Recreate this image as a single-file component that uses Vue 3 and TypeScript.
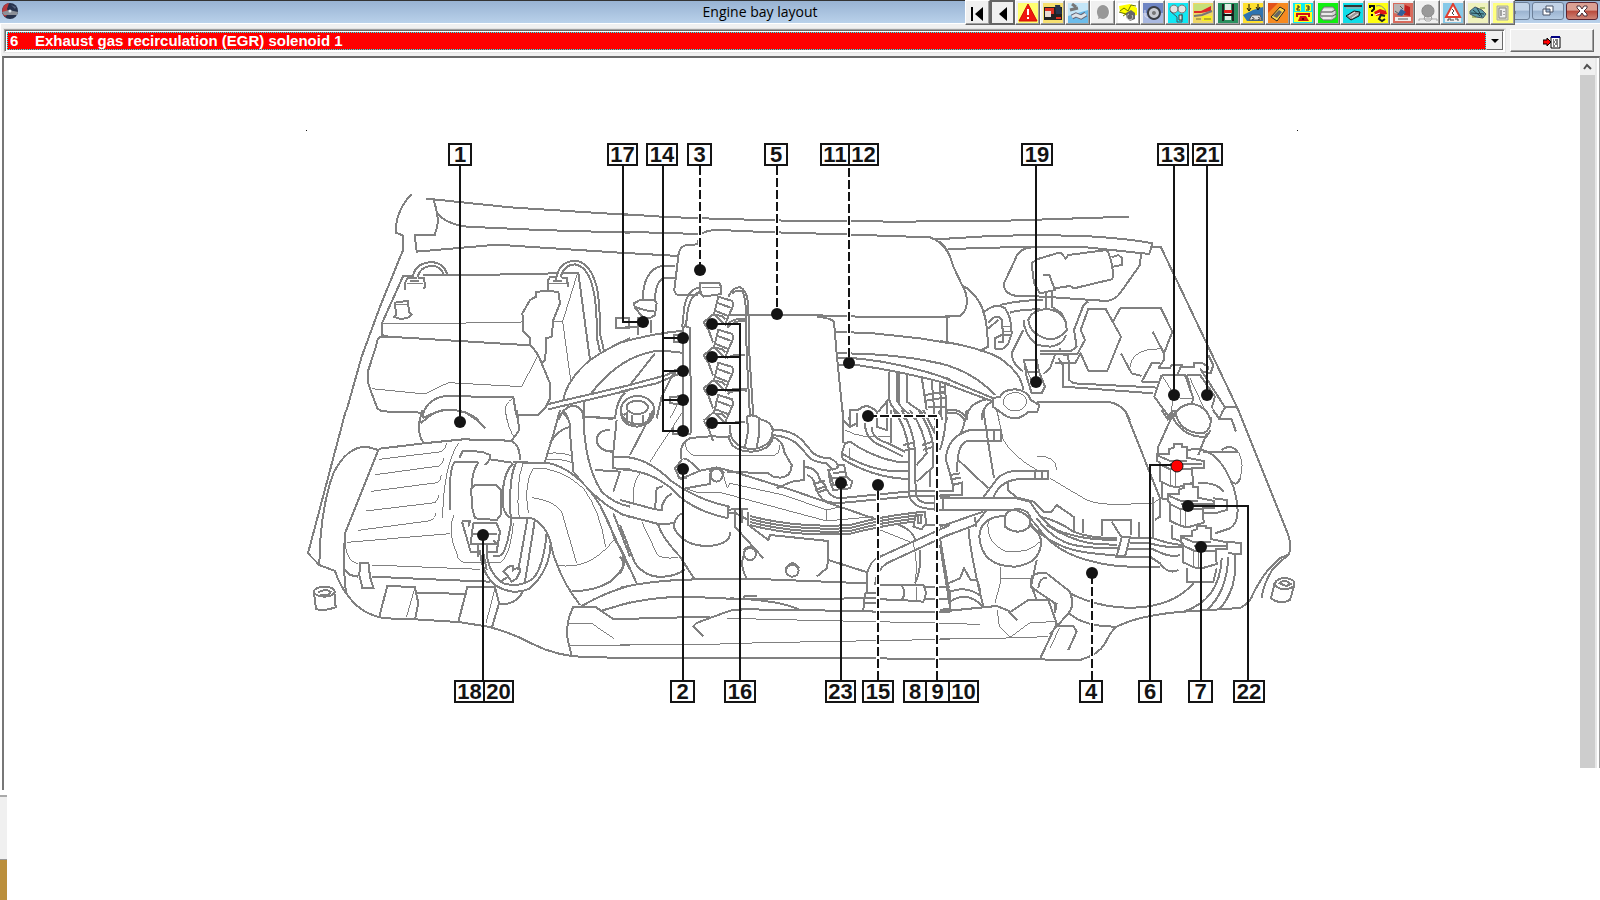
<script setup lang="ts">
import { ref } from 'vue'

interface Part { d: string; f?: string; s?: string; w?: number }
interface Tool { name: string; bg: string; parts: Part[] }
interface Box { n: number; x: number; w: number; y: number }
interface Lead { d: string; dashed?: boolean }
interface Tile { x: number; y: number; thick: string[]; thin: string[] }

const selected = ref('6')

const tools: Tool[] = [
  { name: 'First', bg: '#f0f0f0', parts: [{ d: 'M3 4h2v14h-2zM15 4v14l-8 -7z', f: '#000' }] },
  { name: 'Previous', bg: '#f0f0f0', parts: [{ d: 'M14 4v14l-8 -7z', f: '#000' }] },
  { name: 'Warnings', bg: '#ffff70', parts: [{ d: 'M10 1L19 18H1z', f: '#f01810', s: '#d01000' }, { d: 'M9 6h2v6h-2zM9 14h2v2h-2z', f: '#fff' }] },
  { name: 'Identification', bg: '#f7e070', parts: [{ d: 'M1 4H19V17H1z', f: '#222' }, { d: 'M2 5H11V11H2z', f: '#e03020' }, { d: 'M2 6H8V14H2z', f: '#e8dcd4' }, { d: 'M2 5H11V8H2z', f: '#e03020' }, { d: 'M12 2H17L19 11H13z', f: '#26364e' }, { d: 'M13 15h5', s: '#e03020', w: 2 }] },
  { name: 'Service', bg: '#6cbcea', parts: [{ d: 'M0 0H20V7L0 13z', f: '#c4e6f8' }, { d: 'M4 1L8 4M2 7L10 5', s: '#777', w: 3 }, { d: 'M4 14L8 12L13 14L18 11', s: '#667', w: 5 }, { d: 'M4 14L8 12L13 14L18 11', s: '#dde3e8', w: 3 }, { d: 'M17 10L20 9M3 15L1 17', s: '#6cbcea', w: 2 }] },
  { name: 'Gearbox', bg: '#f0f0f0', parts: [{ d: 'M11 2A6 7 0 1 1 10.9 2z', f: '#fff' }, { d: 'M10 2A6 7 0 1 1 9.9 2z', f: '#989898' }, { d: 'M6 12L5 16L8 15z', f: '#989898' }] },
  { name: 'Engine', bg: '#fff', parts: [{ d: 'M1 3L12 1L19 5V12L11 14L2 9z', f: '#ff0' }, { d: 'M2 8L6 5L10 8L13 2L18 3M1 9L8 11L5 13', s: '#6c7500', w: 1 }, { d: 'M8 10L13 7L17 10V16L12 18L8 14z', f: '#666' }, { d: 'M11 11A3 3 0 1 0 14 12', s: '#ccc' }] },
  { name: 'Wheels', bg: '#6f86c4', parts: [{ d: 'M0 10H20V20H0z', f: '#a9b8e0' }, { d: 'M11 3A7 7 0 1 1 10.9 3z', f: '#3a3d44' }, { d: 'M11 5A5 5 0 1 1 10.9 5z', f: '#c8cbd2' }, { d: 'M11 8A2 2 0 1 1 10.9 8z', f: '#777' }, { d: 'M2 7V13L5 15', s: '#dde', w: 1 }] },
  { name: 'Timing belt', bg: '#10e8f4', parts: [{ d: 'M6 2A4 4 0 1 1 5.9 2zM14 2A4 4 0 1 1 13.9 2z', f: '#e4e4e4', s: '#777' }, { d: 'M2 8L9 14V19H14V11', s: '#456', w: 1 }, { d: 'M11 12h3v5h-3z', f: '#ddd', s: '#444' }] },
  { name: 'Bodywork', bg: '#f0d766', parts: [{ d: 'M1 1H19V6L1 8z', f: '#c6e07a' }, { d: 'M1 8L8 8L18 3V8L8 10L1 10z', f: '#e02828' }, { d: 'M1 13L9 12L19 8', s: '#777', w: 2 }, { d: 'M9 13H19V18H9z', f: '#f6f020' }, { d: 'M3 16h5M11 16h7', s: '#776b32' }] },
  { name: 'Lifting', bg: '#2a9060', parts: [{ d: 'M7 1H13V17H7z', f: '#dfece4' }, { d: 'M5 1V18M15 1V18', s: '#222', w: 2 }, { d: 'M6 7H14V10H6z', f: '#e02020' }, { d: 'M5 12H15', s: '#111', w: 2 }] },
  { name: 'Alignment', bg: '#ffe030', parts: [{ d: 'M0 12L10 7L20 4V18H4z', f: '#2f73b0' }, { d: 'M6 1V7M4 5L6 8L8 5M15 1V6M13 4L15 7L17 4', s: '#111', w: 1 }, { d: 'M6 17L9 12H17L19 17z', f: '#ddd', s: '#555' }, { d: 'M9 15A1 1 0 1 1 9 16M15 15A1 1 0 1 1 15 16', s: '#333', w: 1 }] },
  { name: 'Diagnostics', bg: '#f68a20', parts: [{ d: 'M0 0H10L0 10z', f: '#e25218' }, { d: 'M3 14L12 4L17 7L9 18z', f: '#ffd84a', s: '#222' }, { d: 'M5 13L11 7L14 9L9 15z', f: '#666' }] },
  { name: 'Telephone', bg: '#10eaf0', parts: [{ d: 'M2 1H8V8H2zM12 1H18V8H12zM1 9H19V19H1z', f: '#ffff20' }, { d: 'M4 3H6V5H4V7H7M13 3H16V7H13M14 5H16', s: '#223' }, { d: 'M5 18L7 13H13L16 18z', f: '#d01010' }, { d: 'M4 14V11H16V14', s: '#d01010', w: 2 }, { d: 'M9 15h2v2h-2z', f: '#600' }] },
  { name: 'Print', bg: '#10f010', parts: [{ d: 'M3 8L6 4H15L18 8V14L14 17H5L2 14z', f: '#d6d6d6', s: '#777' }, { d: 'M3 9H14L17 7M3 13H15L18 11', s: '#555', w: 1 }, { d: 'M5 7H14M4 11H14M5 15H13', s: '#fff', w: 1 }] },
  { name: 'Lubricants', bg: '#10dde8', parts: [{ d: 'M1 3H19', s: '#333', w: 2 }, { d: 'M3 5h15', s: '#c99' }, { d: 'M3 13L11 8L17 9L16 13L8 17z', f: '#999', s: '#111' }, { d: 'M6 13L12 9M9 15L15 11', s: '#eee' }] },
  { name: 'Faults', bg: '#ffff10', parts: [{ d: 'M2 5V3H6V6L4 8V9M4 11v2', s: '#111', w: 2 }, { d: 'M8 3Q14 1 18 8', s: '#888', w: 1 }, { d: 'M6 9L12 6L18 8L19 11L8 13z', f: '#e01515' }, { d: 'M17 13L13 12L11 16L14 18L17 16', s: '#222', w: 2 }, { d: 'M7 12L12 10', s: '#fff', w: 1 }] },
  { name: 'Airbags', bg: '#d86a5c', parts: [{ d: 'M1 1H11V12L1 10z', f: '#b9b4b4' }, { d: 'M12 2L17 4V13L11 12z', f: '#c02020' }, { d: 'M4 12L8 6L13 9L9 13z', f: '#315f9a' }, { d: 'M2 14H18V18H2z', f: '#eee' }, { d: 'M5 16H15M7 3L10 6M2 8L6 11', s: '#555', w: 1 }] },
  { name: 'Climate', bg: '#f0f0f0', parts: [{ d: 'M10 2A6 6 0 1 1 9.9 2z', f: '#999', s: '#888' }, { d: 'M7 13L6 16H14L13 13', s: '#999', w: 1 }, { d: 'M1 18V16H6L8 18H12L14 16H19V18', s: '#aaa' }] },
  { name: 'ABS', bg: '#86c9e8', parts: [{ d: 'M10 1L17 14H3z', f: '#fff', s: '#e04030', w: 2 }, { d: 'M9 6L11 8L9 10L11 12', s: '#444', w: 1 }, { d: 'M2 15H18V19H2z', f: '#eee' }, { d: 'M5 18V16H8V18M10 16V18M12 16H15V18', s: '#444', w: 1 }] },
  { name: 'Component location', bg: '#f0f2bd', parts: [{ d: 'M2 8L7 4L14 7L18 11L15 15L8 14L2 11z', f: '#5b9ba8', s: '#456' }, { d: 'M5 7L12 13M9 5L14 14M3 10L16 11', s: '#203d46', w: 1 }, { d: 'M4 14h4M12 5h5', s: '#698728' }] },
  { name: 'Wiring', bg: '#ffff80', parts: [{ d: 'M4 3H15V17H4z', f: '#d5d5bd', s: '#aaa' }, { d: 'M6 5H13V15H6z', f: '#eee', s: '#888' }, { d: 'M8 7V13M11 8V9M11 11V12', s: '#555', w: 1 }] },
]

const TOP = 144
const LOW = 681
const boxes: Box[] = [
  { n: 1, x: 449, w: 22, y: TOP }, { n: 17, x: 608, w: 29, y: TOP }, { n: 14, x: 647, w: 30, y: TOP },
  { n: 3, x: 688, w: 23, y: TOP }, { n: 5, x: 765, w: 22, y: TOP }, { n: 11, x: 821, w: 28, y: TOP },
  { n: 12, x: 849, w: 29, y: TOP }, { n: 19, x: 1022, w: 30, y: TOP }, { n: 13, x: 1158, w: 30, y: TOP },
  { n: 21, x: 1193, w: 29, y: TOP },
  { n: 18, x: 455, w: 29, y: LOW }, { n: 20, x: 484, w: 29, y: LOW }, { n: 2, x: 671, w: 23, y: LOW },
  { n: 16, x: 725, w: 30, y: LOW }, { n: 23, x: 826, w: 29, y: LOW }, { n: 15, x: 863, w: 30, y: LOW },
  { n: 8, x: 904, w: 22, y: LOW }, { n: 9, x: 926, w: 23, y: LOW }, { n: 10, x: 949, w: 29, y: LOW },
  { n: 4, x: 1080, w: 22, y: LOW }, { n: 6, x: 1139, w: 22, y: LOW }, { n: 7, x: 1189, w: 23, y: LOW },
  { n: 22, x: 1234, w: 30, y: LOW },
]

const leads: Lead[] = [
  { d: 'M460 166V422' }, { d: 'M623 166V322H643' },
  { d: 'M663 166V431H683M663 338H683M663 371H683M663 400H683' },
  { d: 'M700 166V270', dashed: true }, { d: 'M777 166V314', dashed: true }, { d: 'M849 144V363', dashed: true },
  { d: 'M1036 166V382' }, { d: 'M1174 166V395' }, { d: 'M1207 166V395' },
  { d: 'M483 680V535' }, { d: 'M683 680V469' },
  { d: 'M740 680V324H712M740 357H712M740 390H712M740 423H712' },
  { d: 'M841 680V483' }, { d: 'M878 680V485', dashed: true }, { d: 'M937 680V416H868', dashed: true },
  { d: 'M1092 680V573', dashed: true }, { d: 'M1150 680V465H1177' }, { d: 'M1201 680V547' },
  { d: 'M1248 680V506H1188' },
]

const dots: number[][] = [
  [460, 422], [643, 322], [683, 338], [683, 371], [683, 400], [683, 431], [700, 270], [777, 314],
  [849, 363], [1036, 382], [1174, 395], [1207, 395], [483, 535], [683, 469], [712, 324], [712, 357],
  [712, 390], [712, 423], [841, 483], [878, 485], [868, 416], [1092, 573], [1201, 547], [1188, 506],
]

const injectors: number[][] = [[2137, 973], [2137, 1072], [2137, 1171], [2137, 1268]]
const solenoids: number[][] = [[3531, 1398], [3563, 1518], [3602, 1642]]

const tiles: Tile[] = [
  {
    x: 900, y: 360,
    thick: [
      'M335 222Q285 275 288 338L310 347V388L240 560L185 710L140 870',
      'M378 237L400 238L630 262L990 285',
      'M400 238Q408 262 410 275L414 300L412 318L404 346H344L350 395L590 374L990 400',
      'M410 275Q430 310 500 320L720 330L990 338',
      'M370 465H530L770 460M783 459H835L870 720M340 467H310L245 612V645L265 650L690 676',
      'M338 478Q340 430 395 426Q430 428 442 462M352 472Q360 440 395 437Q425 440 430 462',
      'M315 510V490L322 475H350M355 473H372L375 500L370 508M330 482H358',
      'M285 548L325 542L326 575L335 583L325 592Q300 602 282 590L288 585Z',
      'M265 650H240Q232 655 228 680L205 750V790L213 815L232 865L245 874L368 878',
      'M690 676Q710 690 725 730L750 790V835L735 865L715 885H655',
      'M690 676V655L670 635V605L667 580L690 540L708 530V516L740 512L775 516L780 550L760 600L755 650L738 655L736 720L727 727',
      'M745 510V480L750 472H770M785 475H800L805 500M760 482H785',
      'M768 480Q775 425 825 422Q870 425 890 500Q900 545 900 640L912 692M782 472Q790 435 825 433Q865 440 880 510Q892 560 890 650L900 695',
      'M948 593H988V623H948Z',
      'M790 840Q800 780 870 720Q930 680 990 655M870 825Q920 755 990 718',
      'M745 852L990 795M745 868L990 810',
      'M368 895Q372 840 435 828L640 832L648 880L655 900M368 895Q410 870 450 870Q500 870 535 900',
      'M775 900Q790 860 820 857Q850 860 853 900M853 845V890L945 895Q950 840 975 818M790 870L805 895',
    ],
    thin: [
      'M245 612H410L530 608L665 606M760 604H788L832 462M788 604L812 780',
      'M322 490H370M745 490H805M285 553H322', 'M215 806L375 822L445 788L665 800L713 708', 'M640 835Q605 850 622 900',
    ],
  },
  {
    x: 1860, y: 360,
    thick: [
      'M0 282L140 291L280 296L500 302H720L830 306L990 302M0 335L240 342M0 398L176 408',
      'M235 526H180Q165 525 163 510L176 400Q180 380 200 375L232 373L240 345Q260 328 300 330L430 336L640 342L930 352Q970 365 990 410M945 357H990',
      'M330 585H560L720 590L990 592M980 592V670',
      'M165 438H125Q70 450 68 540M165 474H135Q105 480 105 545',
      'M42 550L60 540H105L110 550L105 585L95 592Q70 600 55 575L45 565ZM45 560Q70 572 105 575M55 590V645M92 600V638M0 625L30 620H55',
      'M240 488H298L303 500V522L250 530L240 520ZM240 502Q190 510 190 600L186 620M245 515Q205 520 200 600L195 620',
      'M188 900V622Q200 615 210 625L213 900',
      'M162 645H190V667H162ZM185 745L165 750V765M185 828L150 832V850L185 852',
      'M325 530Q340 500 360 502Q382 510 385 560L388 700L400 890M335 520Q350 510 365 512Q374 520 377 560L380 700L390 890',
      'M320 615Q345 590 380 598M322 622Q345 600 380 602M320 715Q345 700 375 705M320 815Q345 802 380 808M322 822Q345 808 380 812',
      'M590 590Q635 595 642 605L650 700L670 900',
      'M645 635L760 640L900 655L990 670M650 700Q850 700 990 738M652 713L720 716Q850 730 990 778M655 735H710Q850 755 990 793',
      'M0 668Q100 640 190 632M0 735Q70 692 130 692L185 698M0 803L140 765L185 742M0 815L110 790L185 758M105 700L30 795',
      'M160 760L125 830L110 895M3 870A50 42 0 1 1 103 870A50 42 0 1 1 3 870M20 862A32 20 0 1 1 84 862A32 20 0 1 1 20 862M10 885L20 880V908M35 888V915M70 888V912M90 880L98 890',
      'M688 900L690 870H715Q740 845 770 875V895M775 875L800 845V890',
      'M808 755V840Q815 870 860 900M830 755V840Q840 865 890 900M838 755V850M860 760V845L910 880M905 770L920 870M935 780L945 900M960 790L965 900M915 825L975 815M918 842L978 832M925 860H975',
    ],
    thin: ['M185 830L150 895M245 502H300'],
  },
  {
    x: 2820, y: 360,
    thick: [
      'M0 302H200L567 290M5 357L150 348L290 345L430 348Q560 355 637 370L628 402L440 382L300 380L110 384L25 388',
      'M0 365Q25 385 40 440L78 520Q88 570 60 588L0 590M637 380H662L895 870',
      'M275 382Q235 385 225 420L192 490Q190 520 225 527L310 530L500 543Q525 540 540 520L600 435L603 400',
      'M275 430L290 418L350 400L362 398L377 415L385 405L500 390Q515 410 520 470L515 478L402 505L390 498L342 505M275 430L282 490L300 520L345 510L328 465H310M515 412L535 405L547 415L545 435L520 440',
      'M318 515V565M335 512V560M322 567Q380 575 380 630Q360 660 322 657Q268 640 265 600Q275 570 322 567M252 600Q250 640 290 675L330 680Q370 675 378 645M335 560L365 580L380 610',
      'M180 555Q240 540 310 540M210 578Q240 568 300 568M65 495Q130 530 140 620L145 680L120 692',
      'M128 580Q165 545 195 565Q215 590 215 640L205 670Q190 695 165 685V655L185 645H210M145 610Q170 575 185 600L190 650M175 665H190V650M145 625L175 600',
      'M250 630L215 700Q215 730 250 755M252 720H290L297 755L315 800L305 820H275L260 770ZM262 755H297M345 705L330 745L310 762M360 685V692',
      'M445 545Q430 550 425 570L402 630L410 680L395 692H300M300 702H412L435 660L422 630L445 567H497L543 650L502 752H445L422 700L405 730H345',
      'M355 715L368 735L370 800L640 820M370 705H385L388 780L400 790L655 803',
      'M520 603L542 563H662L697 635L672 700V720L655 745M638 635L672 700M543 700L575 760L605 768',
      'M655 745H690L695 735H725L712 765M722 742H762V728H785L805 740V750M605 785L635 730H660M605 785H655',
      'M665 765H735L760 835L755 850M665 765L643 830L690 895L700 870M740 765H780L825 830L815 865M740 765L750 800',
      'M805 705L820 735L812 760L790 755M780 745L855 862H895M855 862L838 895M820 870L838 898H870',
      'M700 890Q720 850 760 852Q800 860 812 900',
      'M0 663Q130 685 180 715Q245 760 250 810M0 730Q100 755 165 825M0 768L160 835M0 785L155 843',
      'M158 835L180 830Q190 808 225 808Q265 812 272 840L298 855L292 875L265 875Q225 915 180 875L158 860ZM290 845H500Q550 850 570 900',
      'M125 900Q125 860 155 845M80 900Q80 850 140 838M20 870Q60 865 75 890M15 790L20 900M0 800H15M0 820H15M0 835H15',
    ],
    thin: [
      'M255 730L280 800M570 740Q575 700 620 690L670 685M665 765L700 820L720 835H760M700 835L690 895M750 775L790 860',
      'M190 845A35 28 0 1 1 260 845A35 28 0 1 1 190 845M170 870L178 900M190 620H215M190 635H215',
    ],
  },
  {
    x: 900, y: 1230,
    thick: [
      'M138 0L24 430L58 465L105 483Q120 530 150 565Q190 615 255 625L345 628L475 636L565 650Q640 670 700 703Q770 738 850 741L990 744',
      'M58 465Q60 300 100 190Q140 110 200 110L235 120L135 370Q128 500 140 555M235 120L240 116L370 100L490 88L630 92Q660 100 660 150',
      'M368 0Q345 60 370 98M362 40Q400 5 430 0M500 10Q535 30 555 55M650 0L658 60L635 92',
      'M450 300V260Q448 170 465 157H535M478 143L488 123L545 125L570 135V148L635 158M570 148L555 165M535 157Q505 200 518 300L525 325L590 330L605 310M515 235L525 226H590L603 240V310',
      'M640 160Q605 190 608 280Q612 315 635 325H660M650 155Q625 200 632 320M640 157L685 155M670 158L740 158Q830 175 900 285Q930 340 945 390Q975 430 972 465Q960 490 930 515Q880 545 815 543',
      'M660 325L690 323Q730 335 750 390Q760 440 770 460Q790 520 840 585M683 323L655 480M705 328L675 515',
      'M540 420Q545 490 585 525Q640 560 690 535Q750 480 752 400M560 430Q565 490 610 520Q660 535 700 505Q730 470 740 370',
      'M625 470L640 468V480L658 470L660 485L650 505L635 515L625 500L610 485ZM600 515L625 500M550 430L560 480',
      'M486 333H510L505 350M486 335L512 425H540M520 340H590L600 365L590 425H560M520 340L512 400M510 403H590M518 372H590M535 405V440M560 405V430M580 390L595 405',
      'M635 325Q620 430 600 437H580M180 460L205 458L210 500L220 533H187L178 495ZM135 480L150 495L175 500M215 500L440 510L570 515',
      'M238 620L262 527L345 532L355 580L345 628M352 548L500 552M475 636L502 530H585L597 580L575 655M597 583Q650 585 668 545',
      'M42 545A31 15 0 1 1 104 545A31 15 0 1 1 42 545M54 547Q75 535 92 545L85 555H60M42 548L48 597Q70 605 107 592L103 545',
      'M845 588Q920 545 990 527M905 602L990 577M820 590H885L940 627H990M820 590Q795 640 803 690L815 738',
      'M780 0Q765 60 735 155M750 100Q770 60 810 50M790 10Q815 30 810 70L820 185M850 0Q850 160 905 245Q940 280 990 290M820 185Q900 290 990 322',
      'M858 20L940 27M930 60Q890 60 890 95Q900 125 940 125L950 30M940 130L938 175L990 178M885 180L960 185L940 245M940 140H990M940 310L990 440M900 285L990 480',
    ],
    thin: [
      'M615 0Q625 60 645 85', 'M238 148L425 125Q438 118 440 100M226 194L418 168Q430 160 431 145M214 244L412 218Q424 210 424 195M198 303L405 278Q416 270 416 255M175 361L392 332Q406 325 408 308M142 397L450 371',
      'M475 100Q430 170 428 325M462 315Q440 360 470 430Q475 458 500 458H600Q630 440 640 340M670 155Q645 230 658 325',
      'M685 310Q670 220 700 175Q780 170 850 235Q900 300 917 412M695 263Q760 270 785 305L830 460M770 465Q870 485 945 385',
      'M215 465L540 478M135 400Q140 455 175 462M345 532L320 620M585 535L558 640M803 640H875L942 686M803 707H990M740 130Q790 125 820 140M740 150Q790 145 820 160',
    ],
  },
  {
    x: 1860, y: 1230,
    thick: [
      'M0 140Q80 140 150 210Q230 270 330 290M0 178Q90 180 160 240Q210 300 325 325M325 290V325M0 270L105 298L125 300Q125 270 155 250M130 228L110 235L105 298',
      'M0 312L115 342L162 340M115 345Q125 380 180 440L222 505M185 310Q160 325 163 355Q190 410 270 408Q335 400 330 365M0 345L45 460Q80 505 130 500Q170 498 195 478M0 410L50 520M0 440Q20 460 0 490',
      'M100 0L30 135M188 0V60M212 0V70M160 50V72H212M3 0Q0 45 50 50Q100 45 103 0M20 15V38M35 15V42M70 15V42M90 10V30',
      'M185 150Q175 100 210 85Q260 75 325 82M455 80Q490 90 492 125L515 165Q515 200 480 203L460 200L445 190L320 185',
      'M185 150L165 175L178 205H200M190 145L205 150L240 182M180 208L240 182L290 172L340 185L500 235L760 325M195 235L270 222V190',
      'M272 195A18 20 0 1 1 308 195A18 20 0 1 1 272 195M268 185Q290 165 312 190',
      'M330 45Q325 110 395 118Q460 110 458 60Q455 35 420 28M326 75Q330 125 395 125Q455 120 458 80M375 110L385 60L380 20Q400 10 418 25V70L410 112M345 35L375 35',
      'M455 58Q520 60 550 95L580 130Q600 145 630 145Q655 155 655 175M455 75Q510 78 540 110L570 145Q590 158 620 160L640 180',
      'M625 180L650 175L655 165H672L680 200L697 215L690 235L640 240L630 215ZM640 190L675 185M635 205L680 200M630 190L640 225L685 225',
      'M553 150V210L515 215L470 235M555 172Q590 170 600 210L615 225Q625 260 655 265L880 243H990M560 195Q580 200 585 225Q595 265 620 275L650 280L880 258H990M580 222L615 212M585 240L620 228M590 248L622 238',
      'M325 300L350 295M325 310H350M345 300V350L430 445M365 300V340M385 305V345L445 390L450 375L625 393V450L620 475L590 500M345 298H385M347 310L385 330',
      'M390 318Q530 355 690 345Q780 320 885 308M390 327Q530 364 690 354Q780 329 885 317M390 336Q530 373 690 363Q780 338 885 326M390 345Q530 382 690 371Q780 348 885 334',
      'M372 432A18 18 0 1 1 408 432A18 18 0 1 1 372 432M370 420Q390 400 412 425M498 482A19 18 0 1 1 536 482A19 18 0 1 1 498 482M498 475Q517 445 538 475M370 440Q360 470 380 505',
      'M625 450L745 488M740 550V495Q750 450 780 440L990 345M765 525Q770 480 800 460L990 372M735 548H770M735 548L730 600M735 565H770M735 580H770',
      'M780 525H850M780 568L850 570M845 525H910Q925 550 910 575L845 570Q860 550 845 525M915 532H990M915 568H990',
      'M0 533Q100 510 230 508H440L740 520M0 585Q100 560 200 560L370 568L740 565M370 568L375 557L410 558M330 565Q480 570 540 600M540 600L780 605L990 605',
      'M250 678L220 650Q225 640 240 635L330 602L370 598L540 600M0 627L270 620M0 743H470L990 747',
      'M830 342Q880 360 885 390M900 420Q905 480 885 520M930 180V230M945 262V300L990 300M890 305H915L918 340L905 358L880 350ZM895 315H905L902 340H893ZM960 385L985 530L990 600M915 345H990',
      'M670 0V100M690 50V0M710 50V10M670 30L690 50L710 40M735 40Q735 90 790 110L850 140M755 50Q755 85 800 98L855 125M812 0V100M770 10V50L800 60V20',
      'M690 95Q740 130 800 148Q840 160 870 155M665 130Q720 165 780 178Q840 190 870 180M665 145Q760 205 870 207M690 95L675 100L665 130V145',
      'M820 0Q860 50 868 130V260Q880 290 915 295L945 298M845 0Q880 60 885 120L887 250Q890 275 920 280H945M870 0Q915 60 920 130L890 165M895 0Q935 60 940 110V170L890 215M850 105L880 98M855 120L885 115M905 105L940 95M908 120L942 110M910 0L945 70M960 0L940 70',
    ],
    thin: [
      'M60 190Q35 220 40 280M185 10L90 155M65 335L110 430Q120 450 175 442M195 100Q200 135 230 138H455Q480 135 480 105',
      'M195 235L230 247H300L620 333L760 320M310 195L322 235L330 220L490 255L620 300V333M620 300L660 290M780 360L880 400Q895 460 885 520M890 530V570',
      'M675 60Q730 90 810 78M320 625L530 630L990 640M0 705L270 703L430 698L990 688M690 115V150',
    ],
  },
  {
    x: 2820, y: 1230,
    thick: [
      'M165 60H90Q20 80 18 150L30 190M165 93H80Q50 105 52 185M163 60H183V93H163ZM30 195L60 190M32 208L62 203M38 225L65 218V255H0M30 190L40 230V243H0M20 0Q15 80 0 120M80 0Q75 45 60 75M20 10Q60 0 75 35',
      'M130 0L145 100L162 205M55 150L145 235M130 262L165 215Q180 190 220 183H310M160 262Q180 215 230 208H320M285 182H323V208H285ZM305 182V208',
      'M0 265H230L270 275Q310 340 350 360Q420 390 530 390M0 300H225Q260 305 300 360Q350 430 460 455Q530 475 660 470M0 350L130 305M0 385L105 345L140 300M10 265V300',
      'M203 215V240L230 262L280 275L310 305H335L350 285L403 322V370M430 328V370M485 378V330H573V375M515 335L545 382L530 440H555L570 382H545M597 335V380M640 260V380',
      'M300 320Q350 330 400 365Q450 385 530 384M290 325Q340 390 400 405Q450 415 535 415M270 340Q340 420 460 430L560 440H630L660 460Q685 495 715 480M320 345Q380 385 450 400L530 405',
      'M570 385H640Q680 400 725 405M570 400H630Q680 415 725 410M560 418H640Q690 445 720 435M555 0L660 265V320L645 330',
      'M195 330A38 28 0 1 1 270 330L268 350Q235 380 195 350ZM195 318Q120 320 118 380Q125 470 225 470Q305 460 303 390Q300 370 270 345M290 450L275 520',
      'M85 350Q90 430 130 590M0 405L30 590M105 320L108 350M25 520L60 505L72 475L92 510H112L122 545M30 545Q80 525 125 560M30 575Q80 540 130 590M30 545V595L0 600',
      'M0 605L170 588L212 605L265 570H325L350 640L300 747M205 605L232 630M275 500Q290 485 320 490L390 545Q405 590 385 610L330 672M275 500L272 530L345 580V605M320 505Q300 500 295 535M350 580L345 610M275 530L290 570',
      'M390 550Q480 595 580 593Q700 590 760 520M388 610Q430 650 530 650M355 648H400L410 665L385 720',
      'M730 605Q840 570 845 445M800 600Q860 550 865 440M835 600Q895 540 885 430',
      'M0 747H200L420 750Q475 735 495 700Q515 660 530 650Q600 615 730 605L840 598L900 594Q930 580 940 550Q975 480 1020 445L1047 432',
      'M895 0L1045 375Q1055 410 1047 432L1000 475Q970 520 965 565M1007 520A28 14 0 1 1 1062 522A28 14 0 1 1 1007 520M1018 520Q1035 505 1052 522L1040 528ZM1005 515L993 565Q1020 585 1050 570L1063 525',
      'M700 10L655 110V130M800 70L775 135M705 0Q715 70 790 70Q815 60 812 20M697 20Q730 85 800 80L812 60M818 0L838 25L850 0M840 28H875L888 65M665 0L683 28L690 10',
      'M745 120Q830 100 880 230Q910 330 870 355L825 370M790 125H895M845 120Q870 100 895 125M870 208Q890 235 900 205M775 220Q830 215 850 245',
      'M820 265L860 270V300L825 310M865 395L903 400V432L865 430M740 475V515H820L830 475M665 220V265L690 270M695 345V385L730 395M790 310H830',
    ],
    thin: [
      'M170 0L190 90Q220 140 290 180M330 205L440 270Q480 285 540 283L640 280L660 265M290 140Q350 135 350 180M145 330Q135 400 200 425Q270 430 300 395',
      'M183 470V510L165 580M183 507H275M172 600L178 650L210 682L270 638L345 635M0 687L135 686L325 680M0 640L120 643M358 655L330 715M895 125Q915 165 900 205',
    ],
  },
]
</script>

<template>
  <div class="window">
    <header class="title-bar">
      <svg class="app-icon" viewBox="0 0 16 16" aria-hidden="true">
        <circle cx="8" cy="8" r="8" fill="#27324c" />
        <path d="M7 0A8 8 0 0 0 3 14L7 10L5 6Z" fill="#b83a3c" />
        <path d="M0 9L7 7L16 9L15 12H2Z" fill="#8c9098" />
        <path d="M9 2L14 4L13 6Z" fill="#53607c" />
        <circle cx="8" cy="8" r="1.5" fill="#dfe9f2" />
      </svg>
      <h1>Engine bay layout</h1>
      <nav class="tools" aria-label="Modules">
        <button v-for="t in tools" :key="t.name" type="button" :aria-label="t.name">
          <svg viewBox="0 0 20 20" aria-hidden="true">
            <rect width="20" height="20" :fill="t.bg" />
            <path v-for="(p, i) in t.parts" :key="i" :d="p.d" :fill="p.f ?? 'none'" :stroke="p.s ?? 'none'" :stroke-width="p.w ?? 1" />
          </svg>
        </button>
      </nav>
      <div class="window-buttons">
        <button type="button" class="minimise" aria-label="Minimise">
          <svg viewBox="0 0 14 12"><path d="M1 6H8V9H1Z" fill="#fff" stroke="#4a5568" /></svg>
        </button>
        <button type="button" class="restore" aria-label="Restore">
          <svg viewBox="0 0 14 12"><path d="M5 1H12V7H9V10H2V4H5Z" fill="#fff" stroke="#4a5568" /><path d="M5 4H9V7H5Z" fill="#9db5d1" stroke="#4a5568" /></svg>
        </button>
        <button type="button" class="close" aria-label="Close">
          <svg viewBox="0 0 14 12"><path d="M2 1H5L7 4L9 1H12V3L9 6L12 9V11H9L7 8L5 11H2V9L5 6L2 3Z" fill="#fff" stroke="#4c3038" /></svg>
        </button>
      </div>
    </header>

    <div class="selector-row">
      <div class="combo">
        <select v-model="selected" aria-label="Component">
          <option value="6">6&nbsp;&nbsp;&nbsp;&nbsp;Exhaust gas recirculation (EGR) solenoid 1</option>
        </select>
        <span class="drop" aria-hidden="true"></span>
      </div>
      <button type="button" class="list-button" aria-label="Show list">
        <svg viewBox="0 0 18 13" aria-hidden="true">
          <path d="M0 4H4V2L8 6L4 10V8H0Z" fill="#f00" stroke="#000" />
          <path d="M8 1H17V12H8Z" fill="#fff" stroke="#000" />
          <path d="M8 1H17" stroke="#000080" stroke-width="2" />
          <path d="M10 4H11M12 4H15M10 6H12M13 6H15M10 8H11M12 8H15M10 10H12M14 10H15" stroke="#000" />
        </svg>
      </button>
    </div>

    <main class="panel">
      <div class="stage">
        <svg class="diagram" viewBox="300 120 1000 590" role="img" aria-label="Engine bay diagram">
          <g class="sketch" transform="scale(0.33333)">
            <g v-for="(t, i) in tiles" :key="i" :transform="`translate(${t.x} ${t.y})`">
              <path v-for="(d, k) in t.thin" :key="'n' + k" :d="d" class="thin" />
              <path v-for="(d, k) in t.thick" :key="'k' + k" :d="d" />
            </g>
            <g v-for="(p, i) in injectors" :key="'i' + i" :transform="`translate(${p[0]} ${p[1]})`">
              <path class="body" d="M18 -83L60 -70L62 -55L38 0L5 -30Z" />
              <path d="M-26 -6L0 -28L28 -26L40 -15M-26 -6L-10 20L2 55M10 -66L55 -50M5 -42L46 -26" />
            </g>
            <g v-for="(p, i) in solenoids" :key="'s' + i" :transform="`translate(${p[0]} ${p[1]})`">
              <path class="body" d="M-60 -35H-25V-50L-10 -55V-65H15V-58H30V-25L80 -15V5H45L48 50L0 64L-20 60L-52 45V-10L-60 -15Z" />
              <path d="M-60 -32L-20 -15H30M-20 -5H75M-52 -5L-20 10H45" />
              <path class="thin" d="M-20 10V58M-5 15V60" />
            </g>
          </g>
          <g class="callouts">
            <path v-for="(l, i) in leads" :key="'h' + i" :d="l.dashed ? l.d : ''" class="halo" />
            <path v-for="(l, i) in leads" :key="'l' + i" :d="l.d" :class="{ dashed: l.dashed }" class="lead" />
            <circle v-for="(p, i) in dots" :key="'d' + i" :cx="p[0]" :cy="p[1]" r="6" />
            <circle cx="1177" cy="466" r="6" class="active" />
            <g v-for="b in boxes" :key="b.n">
              <rect :x="b.x" :y="b.y" :width="b.w" height="21" />
              <text :x="b.x + b.w / 2" :y="b.y + 18">{{ b.n }}</text>
            </g>
            <path d="M306 130h1v1h-1zM1297 130h1v1h-1z" />
          </g>
        </svg>
      </div>
      <div class="scrollbar" aria-hidden="true">
        <svg viewBox="0 0 15 17"><path d="M4 11L7 7L11 11" fill="none" stroke="#505050" stroke-width="2" /></svg>
      </div>
    </main>

    <footer class="below">
      <div class="frame-end"></div>
      <div class="status"></div>
      <div class="desktop"></div>
    </footer>
  </div>
</template>

<style>
body {
  margin: 0;
  background: #fff;
}
</style>

<style scoped>
.window {
  display: flex;
  flex-direction: column;
  height: 100vh;
  min-height: 700px;
  font-family: 'Liberation Sans', Arial, sans-serif;
  background: #fff;
}
.title-bar {
  display: grid;
  grid-template-columns: 1fr auto 1fr;
  align-items: start;
  position: relative;
  box-sizing: border-box;
  height: 24px;
  border-top: 1px solid #333;
  border-bottom: 1px solid #fff;
  background: linear-gradient(#98b3d3, #b9d1ea);
}
.app-icon {
  width: 16px;
  height: 16px;
  margin: 2px;
}
h1 {
  margin: 0 80px 0 0;
  font: 400 14px/22px 'Open Sans', 'Noto Sans', sans-serif;
  color: #000;
}
button {
  padding: 0;
  font: inherit;
}
.tools {
  position: absolute;
  z-index: 1;
  top: -1px;
  right: 85px;
  display: flex;
}
.tools button {
  display: flex;
  align-items: center;
  justify-content: center;
  box-sizing: border-box;
  width: 25px;
  height: 25px;
  border: 1px solid;
  border-color: #fff #696969 #696969 #fff;
  background: #f0f0f0;
  box-shadow: inset -1px -1px #a0a0a0;
}
.tools svg {
  flex: none;
  width: 20px;
  height: 20px;
}
.tools button:nth-child(2) {
  border: 2px solid #646464;
  box-shadow: none;
}
.window-buttons {
  position: absolute;
  top: 1px;
  right: 2px;
  display: flex;
  gap: 2px;
}
.window-buttons button {
  display: flex;
  align-items: center;
  justify-content: center;
  box-sizing: border-box;
  width: 32px;
  height: 18px;
  border: 1px solid #6c7f98;
  border-radius: 3px;
  background: linear-gradient(#c3d4e8 45%, #9bb3d0 50%, #b5cbe3);
}
.window-buttons svg {
  width: 14px;
  height: 12px;
}
.window-buttons .close {
  border-color: #5a2430;
  background: linear-gradient(#dba093 45%, #b94a3c 50%, #ce8577);
}
.selector-row {
  display: flex;
  gap: 5px;
  box-sizing: border-box;
  height: 32px;
  padding: 5px 6px 4px 3px;
  border-left: 1px solid #fff;
  background: #f0f0f0;
}
.combo {
  display: flex;
  flex: 1;
  box-sizing: border-box;
  padding: 1px;
  border: 1px solid;
  border-color: #a0a0a0 #fff #fff #a0a0a0;
  outline: 1px solid #e3e3e3;
  background: #fff;
  box-shadow: inset 1px 1px #696969;
}
select {
  flex: 1;
  min-width: 0;
  margin: 1px 0 0 1px;
  padding: 0 2px;
  border: 1px dotted #0ff;
  border-radius: 0;
  appearance: none;
  font: 700 15px/16px 'Liberation Sans', Arial, sans-serif;
  color: #fff;
  background: #f00;
  outline: none;
}
.drop {
  display: flex;
  align-items: center;
  justify-content: center;
  box-sizing: border-box;
  width: 17px;
  border: 1px solid;
  border-color: #f0f0f0 #696969 #696969 #f0f0f0;
  background: #f0f0f0;
}
.drop::before {
  content: '';
  border: 4px solid transparent;
  border-top-color: #000;
  border-bottom: 0;
}
.list-button {
  display: flex;
  align-items: center;
  justify-content: center;
  box-sizing: border-box;
  width: 84px;
  border: 1px solid;
  border-color: #fff #696969 #696969 #fff;
  background: #f0f0f0;
  box-shadow: inset -1px -1px #a0a0a0;
}
.list-button svg {
  width: 18px;
  height: 13px;
  margin-top: 3px;
}
.panel {
  display: flex;
  flex: 1;
  min-height: 0;
  margin-left: 2px;
  border: solid;
  border-width: 2px 1px 0 2px;
  border-color: #696969 #a0a0a0 #696969 #777;
  background: #fff;
}
.stage {
  display: flex;
  flex: 1;
  justify-content: center;
  min-width: 0;
  padding: 62px 0 0 16px;
  overflow: hidden;
}
.diagram {
  flex: none;
  width: 1000px;
  height: 590px;
}
.sketch {
  fill: none;
  stroke: #808080;
  stroke-width: 6;
  shape-rendering: crispEdges;
}
.sketch .thin {
  stroke-width: 3;
}
.sketch .body {
  fill: #fff;
}
.callouts {
  fill: #141414;
}
.callouts .lead {
  fill: none;
  stroke: #141414;
  stroke-width: 2;
  shape-rendering: crispEdges;
}
.callouts .halo {
  fill: none;
  stroke: #fff;
  stroke-width: 4;
}
.callouts .dashed {
  stroke-dasharray: 9 3;
}
.callouts rect {
  fill: #fff;
  stroke: #141414;
  stroke-width: 2;
  shape-rendering: crispEdges;
}
.callouts text {
  font: 700 22px 'Liberation Sans', Arial, sans-serif;
  text-anchor: middle;
}
.callouts .active {
  fill: #f00;
  stroke: #141414;
}
.scrollbar {
  width: 15px;
  margin-right: 4px;
  background: #cdcdcd;
  box-shadow: 2px 0 #e8e8e8;
}
.scrollbar svg {
  display: block;
  width: 15px;
  height: 17px;
  background: #f0f0f0;
}
.below {
  display: flex;
  flex: none;
  flex-direction: column;
  width: 7px;
  height: 132px;
}
.frame-end {
  height: 22px;
  margin-left: 2px;
  border-left: 2px solid #777;
}
.status {
  flex: 1;
  margin-top: 5px;
  border-top: 2px solid #aaa;
  border-bottom: 1px solid #999;
  background: #f0f0f0;
}
.desktop {
  height: 40px;
  background: #bb8f3c;
}
</style>
